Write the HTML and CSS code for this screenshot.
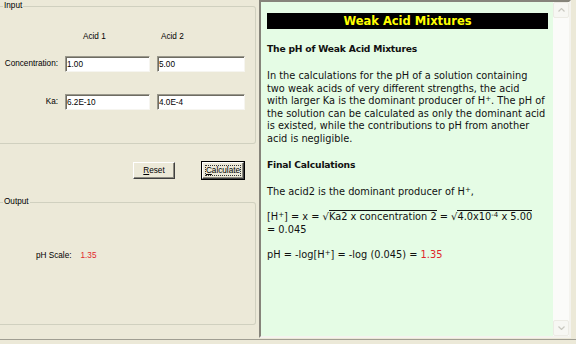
FILE: index.html
```html
<!DOCTYPE html>
<html lang="en">
<head>
  <meta charset="UTF-8">
  <title>Weak Acid Mixtures</title>
  <link rel="stylesheet" href="styles.css">
</head>
<body>
  <div class="window">
    <div class="left">
      <fieldset class="group group-input">
        <legend>Input</legend>
        <div class="input-grid">
          <span></span>
          <span class="col-head head1">Acid 1</span>
          <span class="col-head head2">Acid 2</span>

          <label class="row-label">Concentration:</label>
          <input class="field" type="text" value="1.00">
          <input class="field" type="text" value="5.00">

          <label class="row-label">Ka:</label>
          <input class="field" type="text" value="6.2E-10">
          <input class="field" type="text" value="4.0E-4">
        </div>
      </fieldset>

      <div class="buttons">
        <button class="btn"><u>R</u>eset</button>
        <button class="btn btn-default"><span class="focus"><u>C</u>alculate</span></button>
      </div>

      <fieldset class="group group-output">
        <legend>Output</legend>
        <div class="result">
          <span>pH Scale:</span>
          <span class="red">1.35</span>
        </div>
      </fieldset>
    </div>

    <div class="doc">
      <div class="doc-body">
        <div class="doc-title">Weak Acid Mixtures</div>

        <h3>The pH of Weak Acid Mixtures</h3>
        <p class="nowrap">In the calculations for the pH of a solution containing<br>
          two weak acids of very different strengths, the acid<br>
          with larger Ka is the dominant producer of H<sup>+</sup>. The pH of<br>
          the solution can be calculated as only the dominant acid<br>
          is existed, while the contributions to pH from another<br>
          acid is negligible.</p>

        <h3>Final Calculations</h3>
        <p>The acid2 is the dominant producer of H<sup>+</sup>,</p>
        <p class="nowrap">[H<sup>+</sup>] = x = <span class="root">&radic;</span><span class="radic">Ka2 x concentration 2</span> = <span class="root">&radic;</span><span class="radic">4.0x10<sup>-4</sup> x 5.00</span><br>= 0.045</p>
        <p>pH = -log[H<sup>+</sup>] = -log (0.045) = <span class="red">1.35</span></p>
      </div>

      <div class="scrollbar">
        <div class="sb-btn">
          <svg width="7" height="4" viewBox="0 0 7 4"><path d="M0.5 3.5 L3.5 0.5 L6.5 3.5" fill="none" stroke="#c9c8c0" stroke-width="1.2"/></svg>
        </div>
        <div class="sb-track"></div>
        <div class="sb-btn">
          <svg width="7" height="4" viewBox="0 0 7 4"><path d="M0.5 0.5 L3.5 3.5 L6.5 0.5" fill="none" stroke="#c9c8c0" stroke-width="1.2"/></svg>
        </div>
      </div>
    </div>
  </div>
</body>
</html>
```

FILE: styles.css
```css
body {
  margin: 0;
  background-color: #ece9d8;
  font-family: "Liberation Sans", Arial, sans-serif;
  font-size: 8.2px;
  color: #000;
}

.window {
  display: flex;
  gap: 3px;
  height: 339px;
  border-bottom: 1px solid #a09e92;
}

/* left side: the form */
.left {
  width: 256px;
  flex: none;
}

.group {
  margin: 0;
  padding: 0;
  width: 256px;
  box-sizing: border-box;
  min-inline-size: 0;
  border: 1px solid #d0d0bf;
  border-left: 0;
  border-radius: 0 3px 3px 0;
}

.group legend {
  margin-left: 3px;
  padding: 0 1px;
  line-height: 10px;
}

.group-input {
  margin-top: 1px;
  padding-bottom: 33px;
}

.input-grid {
  display: grid;
  grid-template-columns: 58px 85px 88px;
  grid-template-rows: 24px 38px 16px;
  column-gap: 7px;
  align-items: start;
  margin-top: 21px;
}

.col-head {
  line-height: 10px;
}

.head1 {
  padding-left: 18px;
}

.head2 {
  padding-left: 4px;
}

.row-label {
  text-align: right;
  line-height: 16px;
}

.field {
  height: 16px;
  box-sizing: border-box;
  margin: 0;
  padding: 0 1px;
  font-family: inherit;
  font-size: 8.2px;
  color: #000;
  background: white;
  border: 1px solid;
  border-color: #9a988c #f6f5f0 #f6f5f0 #9a988c;
  box-shadow: inset 1px 1px 0 #6e6c62;
  outline: none;
}

.buttons {
  display: flex;
  gap: 27px;
  padding-left: 133px;
  margin-top: 18px;
}

.btn {
  width: 42px;
  height: 17px;
  padding: 0;
  font-family: inherit;
  font-size: 8.2px;
  color: #000;
  background-color: #ece9d8;
  border: 1px solid;
  border-color: #fff #404040 #404040 #fff;
  box-shadow: inset -1px -1px 0 #8c8a80;
}

.btn-default {
  outline: 1px solid #000;
}

.btn-default .focus {
  padding: 0;
  border: 1px dotted #333;
}

.group-output {
  margin-top: 18px;
  padding-bottom: 63px;
}

.result {
  display: flex;
  gap: 9px;
  padding-left: 36px;
  margin-top: 44px;
  line-height: 10px;
}

.red {
  color: #e0262b;
}

/* right side: the help text */
.doc {
  width: 312px;
  height: 338px;
  box-sizing: border-box;
  display: flex;
  border: 2px solid;
  border-color: #86847a #f4f3ee #f4f3ee #86847a;
  box-shadow: inset 1px 1px 0 #5c5b55;
}

.doc-body {
  flex: 1;
  min-width: 0;
  background-color: #e5fce5;
  padding: 11px 5px 0 6px;
  font-family: "DejaVu Sans", Verdana, sans-serif;
  font-size: 9.8px;
  line-height: 12.5px;
  color: #111;
}

.doc-title {
  height: 16px;
  line-height: 16px;
  background-color: #000;
  color: #ffff00;
  text-align: center;
  font-weight: bold;
  font-size: 11.5px;
}

.doc-body h3 {
  margin: 14px 0 14.5px;
  font-size: 9.2px;
  letter-spacing: -0.2px;
  font-weight: bold;
}

.doc-body h3 + p {
  margin-top: 0;
}

.doc-body p {
  margin: 0 0 12.5px;
}

.nowrap {
  white-space: nowrap;
}

.doc-body sup {
  font-size: 7px;
  line-height: 0;
  vertical-align: 3px;
}

.root {
  font-size: 10px;
}

.radic {
  border-top: 1px solid #111;
}

.scrollbar {
  width: 16px;
  display: flex;
  flex-direction: column;
  background-color: #fbfbf9;
}

.sb-btn {
  height: 16px;
  display: flex;
  align-items: center;
  justify-content: center;
  box-sizing: border-box;
  border: 1px solid #ecebe4;
  border-radius: 2px;
  background-color: #f7f7f3;
}

.sb-track {
  flex: 1;
}
```
